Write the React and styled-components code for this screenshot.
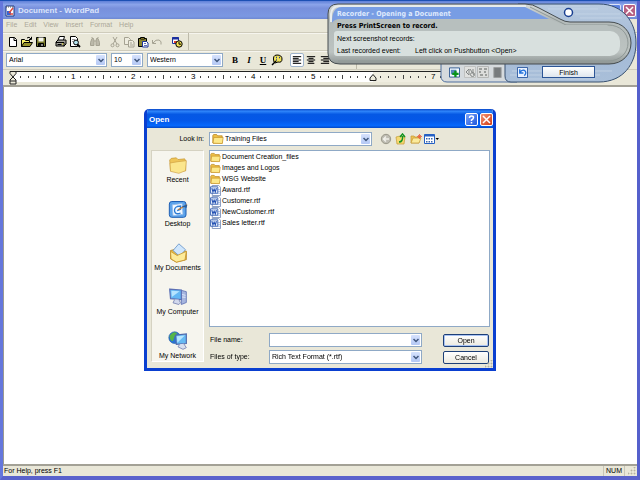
import styled, { createGlobalStyle, css } from 'styled-components';

const GlobalStyle = createGlobalStyle`
    * {
        box-sizing: border-box;
    }
    body {
        margin: 0;
        font-family: 'Liberation Sans', Arial, sans-serif;
        font-size: 7px;
        line-height: 10px;
        color: #000;
    }
    button, input, select {
        font: inherit;
        color: inherit;
        margin: 0;
        padding: 0;
    }
    svg {
        display: block;
        flex: none;
    }
`;

const Desktop = styled.div`
    position: relative;
    height: 100vh;
    overflow: hidden;
    background: #1c50b4;
    padding-top: 1px;
`;

const MainWindow = styled.div`
    height: 100%;
    display: flex;
    flex-direction: column;
    border: solid #6577dc;
    border-width: 0 3px 4px;
    border-right-color: #5560cc;
    border-bottom-color: #5a62cc;
    background: #e9e7d8;
`;

const TitleBar = styled.header`
    display: flex;
    align-items: center;
    gap: 2px;
    height: 18px;
    padding: 1px 1px 0 1px;
    background: linear-gradient(#5f80d8, #8ba4ea 20%, #7890dc 40%, #7b98e2 85%, #6e88d2);
`;

const WindowTitle = styled.h1`
    flex: 1;
    margin: 0;
    font-size: 8px;
    font-weight: 700;
    color: #dbe4fb;
`;

const CaptionButton = styled.button`
    display: flex;
    align-items: center;
    justify-content: center;
    width: 13px;
    height: 13px;
    border: 1px solid #fff;
    border-radius: 2px;
    background: ${(props) => props.$color};
    opacity: ${(props) => (props.$faded ? 0.7 : 1)};
`;

const MenuBar = styled.nav`
    display: flex;
    gap: 7px;
    height: 13px;
    padding: 1px 3px;
    color: #aca899;
`;

const MenuLink = styled.a`
    color: inherit;
    text-decoration: none;
`;

const Bar = styled.div`
    display: flex;
    align-items: center;
    height: ${(props) => props.$height}px;
    padding-left: 3px;
    border-top: 1px solid #cfccbc;
    box-shadow: inset 0 1px #f6f5ee;
`;

const ButtonGroup = styled.div`
    display: flex;
    align-items: center;
    margin-right: 6px;
`;

const ToolButton = styled.button`
    display: flex;
    align-items: center;
    justify-content: center;
    width: 14px;
    height: 14px;
    border: 1px solid transparent;
    background: none;
    ${(props) =>
        props.$pressed &&
        css`
            border-color: #9fb4cc;
            border-radius: 2px;
            background: #fff;
        `}
`;

const StyleGlyph = styled.span`
    font: 700 9px 'Liberation Serif', serif;
    font-style: ${(props) => (props.$italic ? 'italic' : 'normal')};
    text-decoration: ${(props) => (props.$underline ? 'underline' : 'none')};
`;

const BarEnd = styled.span`
    width: 1px;
    height: 100%;
    margin-left: ${(props) => props.$offset}px;
    background: #bdbaaa;
`;

const Combo = styled.div`
    display: flex;
    align-items: center;
    gap: 1px;
    flex: ${(props) => (props.$width ? 'none' : 1)};
    width: ${(props) => (props.$width ? `${props.$width}px` : 'auto')};
    height: 14px;
    margin-right: ${(props) => props.$after || 0}px;
    padding: 1px 1px 1px 2px;
    border: 1px solid #8fa9c6;
    background: #fff;

    select, input {
        flex: 1;
        min-width: 0;
        height: 10px;
        border: 0;
        outline: 0;
        appearance: none;
        background: transparent;
    }
`;

const ArrowBox = styled.span`
    display: flex;
    align-items: center;
    justify-content: center;
    width: 9px;
    height: 100%;
    border-radius: 1px;
    background: linear-gradient(#d6e2fd, #b4c8f5);
    pointer-events: none;
`;

const RulerBar = styled.div`
    display: flex;
    height: 18px;
    padding: 1px 0 3px 2px;
    border-top: 1px solid #cfccbc;
    border-bottom: 2px solid #a3a196;
    overflow: hidden;
`;

const RulerScale = styled.div`
    display: flex;
    height: 11px;
    border-top: 1px solid #222;
    background: linear-gradient(90deg, #fff 360px, #efede0 360px);
`;

const Inch = styled.div`
    display: grid;
    grid-template-columns: repeat(8, 1fr);
    place-items: center;
    flex: none;
    width: 60px;
    transform: translateX(4px);
    font-size: 8px;
`;

const Tick = styled.i`
    width: 1px;
    height: ${(props) => (props.$half ? 4 : 2)}px;
    background: #444;
`;

const Marker = styled.svg`
    margin: 0 -5px 0 3px;
    z-index: 1;
`;

const Page = styled.textarea`
    flex: 1;
    min-height: 0;
    border: 0;
    border-left: 1px solid #9c9a90;
    outline: 0;
    resize: none;
    background: #fff;
`;

const StatusBar = styled.footer`
    display: flex;
    align-items: center;
    height: 12px;
    padding: 0 1px;
    border-top: 2px solid #a3a196;
`;

const StatusText = styled.span`
    flex: 1;
`;

const StatusCell = styled.span`
    padding: 0 2px;
    margin-right: 3px;
    border: solid #c9c6b6;
    border-width: 0 1px;
`;

/* floating recorder */

const Recorder = styled.section`
    position: absolute;
    top: 2px;
    right: 3px;
    z-index: 1;
    width: 310px;
    height: 83px;
    padding: 6px 0 0 10px;
`;

const RecorderShell = styled.svg`
    position: absolute;
    inset: 0;
    z-index: -1;
`;

const RecorderTitle = styled.h2`
    margin: 0;
    font: 700 7px/12px 'DejaVu Sans Condensed', 'DejaVu Sans', sans-serif;
    color: ${(props) => (props.$active ? '#dfeafd' : '#000')};
`;

const EventList = styled.dl`
    display: grid;
    grid-template-columns: 78px 1fr;
    margin: 1px 0 0;
    line-height: 12px;

    dd {
        margin: 0;
    }
`;

const RecorderTools = styled.div`
    display: flex;
    align-items: center;
    gap: 3px;
    margin: 9px 0 0 112px;
`;

const RecorderButton = styled.button`
    display: flex;
    padding: 0;
    border: 0;
    background: none;
    margin-right: ${(props) => props.$after || 0}px;
`;

const FinishButton = styled.button`
    width: 53px;
    height: 12px;
    border: 1px solid #2c5596;
    line-height: 9px;
    background: linear-gradient(#fff, #dfe6ee);
`;

/* open dialog */

const Overlay = styled.div`
    position: absolute;
    inset: 0;
    display: flex;
    align-items: center;
    justify-content: center;
    pointer-events: none;
`;

const Dialog = styled.section`
    width: 352px;
    border: 3px solid #0a3fd0;
    border-top: 0;
    border-radius: 5px 5px 0 0;
    background: #e9e7d8;
    pointer-events: auto;
    overflow: hidden;
`;

const DialogTitle = styled.header`
    display: flex;
    align-items: center;
    gap: 2px;
    height: 19px;
    margin: 0 -3px;
    padding: 2px 3px 0 5px;
    background: linear-gradient(#0a48c8, #2e84fa 12%, #0558e4 28%, #0457e8 60%, #0668fc 88%, #0346c4);

    h2 {
        flex: 1;
        margin: 0;
        font-size: 8px;
        color: #fff;
    }
`;

const DialogBody = styled.div`
    position: relative;
    display: grid;
    grid-template-columns: 53px 1fr;
    grid-template-rows: auto 214px;
    gap: 4px 5px;
    padding: 4px 3px 4px 4px;
`;

const LookInLabel = styled.label`
    align-self: center;
    text-align: right;
`;

const LookInRow = styled.div`
    display: flex;
    align-items: center;
`;

const NavButtons = styled.div`
    display: flex;
    gap: 1px;
    margin-left: 7px;
    width: 111px;
`;

const Places = styled.nav`
    height: 212px;
    overflow: hidden;
    border: 1px solid #fff;
    border-left-color: #d5d2c2;
    border-top-color: #d5d2c2;
    background: #f6f5ee;
`;

const Place = styled.a`
    display: flex;
    flex-direction: column;
    align-items: center;
    height: 44px;
    padding-top: 4px;
    color: inherit;
    text-decoration: none;
    white-space: nowrap;
`;

const MainColumn = styled.div`
    display: flex;
    flex-direction: column;
`;

const FileList = styled.ul`
    display: grid;
    grid-template-rows: repeat(7, 1fr) 95px;
    flex: 1;
    margin: 0 0 6px;
    padding: 1px 0;
    list-style: none;
    border: 1px solid #8fa9c6;
    background: #fff;
    align-content: start;
    grid-template-rows: none;
    grid-auto-rows: 10px;
    row-gap: 1px;
`;

const FileItem = styled.li`
    display: flex;
    align-items: center;
    gap: 1px;
`;

const FormGrid = styled.div`
    display: grid;
    grid-template-columns: 58px 153px 46px;
    column-gap: 1px;
    row-gap: 3px;
    align-items: center;
    padding-left: 1px;
`;

const PushButton = styled.button`
    width: 46px;
    height: 13px;
    margin-left: 20px;
    line-height: 9px;
    border: 1px solid #1d3f77;
    border-radius: 2px;
    background: linear-gradient(#fff, #eceae0);
    box-shadow: ${(props) => (props.$default ? 'inset 0 0 0 1px #a9c3f3' : 'none')};
`;

const DialogGrip = styled.span`
    position: absolute;
    right: 0;
    bottom: 0;
`;

const Icon = ({ size = 12, children }) => (
    <svg width={size} height={size} viewBox="0 0 12 12" fill="none" stroke="#000" aria-hidden="true">
        {children}
    </svg>
);

const ArrowIcon = () => (
    <svg width="6" height="5" viewBox="0 0 6 5" fill="none" stroke="#3f567c" strokeWidth="1.5">
        <path d="M.5 1 3 3.5 5.5 1" />
    </svg>
);

const GripIcon = () => (
    <svg width="8" height="8" fill="#b5b2a2">
        <path d="M6 0h1v1h-1zM3 3h1v1h-1zM6 3h1v1h-1zM0 6h1v1h-1zM3 6h1v1h-1zM6 6h1v1h-1z" stroke="#b5b2a2" strokeWidth=".7" />
    </svg>
);

const FolderIcon = ({ size = 11 }) => (
    <Icon size={size}>
        <path d="M.8 10V2.5L1.6 1.5h3l1 1.3h4.6v7.4H1z" fill="#eebf45" stroke="#b5801a" strokeWidth=".7" />
        <path d="m1 10.2.8-5.7h9.4l-.9 6z" fill="#fde889" stroke="#c9952a" strokeWidth=".7" />
    </Icon>
);

const PlaceFolderIcon = () => (
    <Icon size={20}>
        <path d="M1.5 9.5 1 3l1-1 3-.3 1 1 4-.4.6 1.2v6z" fill="#eec559" stroke="#c29432" strokeWidth=".4" />
        <path d="m1.5 9.800-.3-5L6 4l5-.6-.5 6L6.500 11z" fill="#fbe68d" stroke="#cfa043" strokeWidth=".4" />
    </Icon>
);

const DocIcon = () => (
    <Icon size={11}>
        <path d="M2.5.5h7l2 2v9h-9z" fill="#fff" stroke="#8095bc" />
        <path d="M8 5h3M8 7h3M8 9h3" stroke="#7da1dc" strokeWidth=".7" />
        <path d="M.5 2h8v7h-8z" fill="#e7effb" stroke="#3a63b4" />
        <path d="m2 3.500 1.200 4 1.300-3 1.300 3L7 3.500" stroke="#2653b4" strokeWidth="1.2" />
    </Icon>
);

const WordPadIcon = () => (
    <Icon size={12}>
        <path d="M2 1h8v10H2z" fill="#fff" stroke="#203a80" />
        <path d="M3 6h4v4H3z" fill="#3264d8" stroke="none" />
        <path d="m5 8 4-5M6 9h3" stroke="#e04a3c" strokeWidth="1.5" />
        <path d="M2 2h8" stroke="#53565d" strokeDasharray="1 1" />
    </Icon>
);

const toolGroups = [
    [
        ['New', <path key="n" d="M2.5 1.5h5l2 2v7h-7zM7 1.5v3h2.5" fill="#fff" />],
        [
            'Open',
            <g key="o">
                <path d="M.5 10.5v-7h3l1 1h4v2" fill="#f7ef68" />
                <path d="m.5 10.5 2.5-4h8.500l-2.500 4z" fill="#96912b" />
                <path d="M6 2q2-2 4 1M10.500.8V3.500H8" />
            </g>,
        ],
        [
            'Save',
            <g key="s">
                <path d="M1.500 1.500h9v9h-9z" fill="#77782b" />
                <path d="M3.500 1.500h5v4h-5z" fill="#f5f5ee" stroke="none" />
                <path d="M3.500 7.500h5v3h-5z" fill="#111" />
                <path d="M7 8v2" stroke="#fff" />
            </g>,
        ],
    ],
    [
        [
            'Print',
            <g key="p">
                <path d="m3 4 1.500-3.500h5L8.500 4" fill="#fff" />
                <path d="M1 6l2-2h8v4l-2 2H1z" fill="#a4a49d" />
                <path d="M1 6.500h8v4M2.500 8.500h4" />
                <path d="M7 8h1.500" stroke="#e8d928" />
            </g>,
        ],
        [
            'Print Preview',
            <g key="v">
                <path d="M1.500.5h5l2 2v8h-7z" fill="#fff" />
                <path d="M3 3.500h3M3 5.500h1" stroke="#999" />
                <circle cx="7" cy="6.500" r="2.400" fill="#b7e4ee" />
                <path d="m8.500 8.500 2.500 2.500" strokeWidth="1.800" />
            </g>,
        ],
    ],
    [
        [
            'Find',
            <g key="f" stroke="#a5a292" fill="#bcb9aa">
                <path d="M1.500 6.500 3 2.500h1.500l.5 3v4H1.500zM7 9.500v-4l.5-3H9l1.500 4v3zM5 5h2" />
                <path d="M3 1v1M9 1v1" />
            </g>,
        ],
    ],
    [
        [
            'Cut',
            <g key="c" stroke="#a5a292">
                <path d="m4 1 4 7M8 1 4 8" />
                <circle cx="3.500" cy="9.300" r="1.500" />
                <circle cx="8.500" cy="9.300" r="1.500" />
            </g>,
        ],
        [
            'Copy',
            <g key="y" stroke="#a5a292" fill="#eeecdf">
                <path d="M1.500 1.500h4l2 2v5h-6z" />
                <path d="M5.500 4.500h4l1.500 1.500v5H5.500zM7 7h2M7 9h3" />
            </g>,
        ],
        [
            'Paste',
            <g key="e">
                <path d="M1.500 2.500h8v8h-8z" fill="#8a8431" />
                <path d="M3.500 3V1.500h4V3z" fill="#f3df3c" />
                <path d="M5.500 5.500h4l1.500 1.500v4H5.500z" fill="#fff" stroke="#1b329a" />
                <path d="M7 7.500h2M7 9.500h3" stroke="#1b329a" strokeWidth=".7" />
            </g>,
        ],
        ['Undo', <path key="u" d="M1.500 4v3.500H5M2 7q3-4 6-3t2 4.500" stroke="#a5a292" />],
    ],
    [
        [
            'Date/Time',
            <g key="d">
                <path d="M1.500 1.500h6v6h-6z" fill="#fff" stroke="#1c309e" />
                <path d="M1 2.500h7" stroke="#1c309e" strokeWidth="2" />
                <path d="M3 5h3v2H3z" fill="#e53c33" stroke="none" />
                <circle cx="8" cy="8" r="3.200" fill="#f3e256" />
                <path d="M8 6v2.200h2" />
            </g>,
        ],
    ],
];

const places = [
    ['Recent', <PlaceFolderIcon key="r" />],
    [
        'Desktop',
        <Icon key="d" size={20}>
            <rect x=".8" y="1.500" width="10" height="9.500" rx="1.500" fill="#5ba3ea" stroke="#1f5fb4" strokeWidth=".6" />
            <path d="m2.500 3.500 6-.8.5 6.500-6 .8z" fill="#f2f9ff" stroke="#90b8e8" strokeWidth=".5" />
            <path d="M7.500 8.500q-3 1-3.500-1t1.500-3l2-.3v2L5.500 7" stroke="#2c7cd4" strokeWidth=".8" />
            <path d="m6 6.500 5.500-3" stroke="#c0772e" strokeWidth=".7" />
            <path d="m8 4.500 3.500-1-.3 1.700z" fill="#235da0" stroke="none" />
        </Icon>,
    ],
    [
        'My Documents',
        <Icon key="m" size={20}>
            <path d="m1.500 4.500 4-1 5.500 1.500v5l-6 1.500-3.500-2z" fill="#eabc45" stroke="#b88625" strokeWidth=".5" />
            <path d="m3 4.500 3.500-4L10.500 4 7 8z" fill="#cfe6fc" stroke="#6995c9" strokeWidth=".5" />
            <path d="m1.500 5 4 2.500L11 5l-.8 5.200-5.200 1.300-3.200-2z" fill="#fdeb99" stroke="#c7962d" strokeWidth=".5" />
        </Icon>,
    ],
    [
        'My Computer',
        <Icon key="c" size={20}>
            <path d="m8 2 3 .8v6.500l-3 1.200z" fill="#a7b6df" stroke="#6072b4" strokeWidth=".5" />
            <path d="M8.500 4.500 10.500 5M8.500 6l2 .2" stroke="#e9f0ff" strokeWidth=".5" />
            <path d="m1 1.300 7 .5v5.700L1.500 7z" fill="#63b7f4" stroke="#5d70b4" strokeWidth=".7" />
            <path d="m2 2.200 5 .4L2.300 6z" fill="#b6e4ff" stroke="none" />
            <path d="m4 7.500-1 2 3.500 1 1-1-1-2" fill="#d2d9ed" stroke="#7581b1" strokeWidth=".5" />
        </Icon>,
    ],
    [
        'My Network',
        <Icon key="n" size={20}>
            <circle cx="4" cy="4" r="3.500" fill="#2a74d3" stroke="#1b5aa7" strokeWidth=".4" />
            <path d="M1 3q2-3 4-2 1 1-1 2L3 6Q1 6 1 3z" fill="#55b548" stroke="none" />
            <path d="m4.500 2.500 6.500-.7v5.700L5 8z" fill="#66baf3" stroke="#5069ac" strokeWidth=".7" />
            <path d="m5.300 3.200 4.800-.5L5.600 7z" fill="#b8e5ff" stroke="none" />
            <path d="m7 8-1 1.500 3 1.500 2-1-1.500-2.300" fill="#d7dfef" stroke="#7581b1" strokeWidth=".5" />
        </Icon>,
    ],
];

const folders = ['Document Creation_files', 'Images and Logos', 'WSG Website'];
const files = ['Award.rtf', 'Customer.rtf', 'NewCustomer.rtf', 'Sales letter.rtf'];

const SelectBox = ({ id, label, value, width, after, icon }) => (
    <Combo $width={width} $after={after}>
        {icon}
        <select id={id} aria-label={label} defaultValue={value}>
            <option>{value}</option>
        </select>
        <ArrowBox>
            <ArrowIcon />
        </ArrowBox>
    </Combo>
);

const Ruler = () => (
    <RulerBar>
        <Marker width="10" height="14" viewBox="0 0 10 14" fill="#eceadb" stroke="#222">
            <path d="M2 .5h6v2L5 6 2 2.500zM5 6l3 3v4H2V9zM2 10h6" />
        </Marker>
        <RulerScale>
            {Array.from({ length: 10 }, (_, inch) => (
                <Inch key={inch}>
                    {Array.from({ length: 7 }, (_, i) => (
                        <Tick key={i} $half={i === 3} />
                    ))}
                    {inch === 5 ? (
                        <svg width="8" height="8" viewBox="0 0 8 8" fill="#eceadb" stroke="#222">
                            <path d="M4 1.500 7 5v2.500H1V5z" />
                        </svg>
                    ) : (
                        <span>{inch + 1}</span>
                    )}
                </Inch>
            ))}
        </RulerScale>
    </RulerBar>
);

const AlignIcon = ({ d }) => (
    <Icon size={10}>
        <path d={d} strokeWidth="1.200" />
    </Icon>
);

const FormatBar = () => (
    <Bar $height={19}>
        <SelectBox label="Font" value="Arial" width={101} after={4} />
        <SelectBox label="Font size" value="10" width={32} after={4} />
        <SelectBox label="Script" value="Western" width={76} after={5} />
        <ButtonGroup>
            <ToolButton aria-label="Bold">
                <StyleGlyph>B</StyleGlyph>
            </ToolButton>
            <ToolButton aria-label="Italic">
                <StyleGlyph $italic>I</StyleGlyph>
            </ToolButton>
            <ToolButton aria-label="Underline">
                <StyleGlyph $underline>U</StyleGlyph>
            </ToolButton>
            <ToolButton aria-label="Color">
                <Icon>
                    <path d="M3 8Q1 1 6 1q5 0 5 4 0 4-4 3L4 9z" fill="#efe159" />
                    <path d="M5 3.500h1M8 3.500h1M5 6h1" stroke="#28438f" strokeWidth="1.500" />
                    <path d="m1 11 4-4" strokeWidth="1.500" />
                </Icon>
            </ToolButton>
        </ButtonGroup>
        <ButtonGroup>
            <ToolButton $pressed aria-label="Align left">
                <AlignIcon d="M1 2h10M1 4h7M1 6h10M1 8h7M1 10h10" />
            </ToolButton>
            <ToolButton aria-label="Center">
                <AlignIcon d="M1 2h10M3 4h6M1 6h10M3 8h6M2 10h8" />
            </ToolButton>
            <ToolButton aria-label="Align right">
                <AlignIcon d="M1 2h10M4 4h7M1 6h10M4 8h7M1 10h10" />
            </ToolButton>
        </ButtonGroup>
        <BarEnd $offset={18} />
    </Bar>
);

const RecorderPanel = () => (
    <Recorder>
        <RecorderShell width="310" height="83" viewBox="327 2 310 83" aria-hidden="true">
            <defs>
                <linearGradient id="steel" x2="0" y2="1">
                    <stop offset="0" stopColor="#b9cbe0" />
                    <stop offset=".5" stopColor="#a3b9d6" />
                    <stop offset="1" stopColor="#a9bfd9" />
                </linearGradient>
                <linearGradient id="body" x2="0" y2="1">
                    <stop offset="0" stopColor="#d4d8d7" />
                    <stop offset=".25" stopColor="#b3bab9" />
                    <stop offset=".8" stopColor="#bcc3c1" />
                    <stop offset="1" stopColor="#8d9493" />
                </linearGradient>
            </defs>
            <path d="M441 60v16q0 6 6 6h70V60z" fill="#d5dadd" stroke="#4f6f9e" />
            <path
                d="M505 60v16q0 6 6 6h88c24 0 37-18 37-39S623 4 599 4h-81z"
                fill="url(#steel)"
                stroke="#38506f"
            />
            <path
                d="M548 9h50M575 14h45M580 18h42M512 71h100M510 75h90M520 79h75M550 6h40"
                stroke="#c6d6e7"
                strokeWidth=".8"
            />
            <path
                d="M338 4h187q8 0 14 4l21 11q5 3 10 3h39c14 0 22 10 22 21s-8 21-22 21H340q-12 0-12-11V14q0-10 10-10z"
                fill="url(#body)"
                stroke="#464d50"
            />
            <path
                d="M338 61h270c12 0 20-8 20-18s-8-18-20-18h-42L530 7"
                fill="none"
                stroke="#8f9896"
                strokeWidth="1"
            />
            <path d="M331 22v-8q1-8 8-8h187" fill="none" stroke="#e8ecec" strokeWidth="2" />
            <path d="M332 22q0-15 10-15h183l24 12H340q-6 0-8 4z" fill="#789de4" />
            <path d="M333 31q0-12 8-12h208l15 6h43l7 6z" fill="#b7bfbe" />
            <rect x="334" y="31" width="286" height="25" rx="10" fill="#d8e0de" />
            <rect x="334" y="31" width="30" height="25" rx="3" fill="#d8e0de" />
            <circle cx="568.500" cy="12.500" r="4" fill="#fff" stroke="#193f91" strokeWidth="1.500" />
        </RecorderShell>
        <RecorderTitle $active>Recorder - Opening a Document</RecorderTitle>
        <RecorderTitle as="p">Press PrintScreen to record.</RecorderTitle>
        <EventList>
            <dt>Next screenshot records:</dt>
            <dd />
            <dt>Last recorded event:</dt>
            <dd>Left click on Pushbutton &lt;Open&gt;</dd>
        </EventList>
        <RecorderTools>
            <RecorderButton aria-label="Insert screenshot" $after={1}>
                <Icon size={11}>
                    <path d="M.5 1h11v10H.5z" fill="#f4faff" stroke="#28548e" />
                    <path d="M2 3h6v5H2z" fill="#5687bc" stroke="none" />
                    <path d="M7 4v7M3.500 7.500h7" stroke="#08931c" strokeWidth="2.500" />
                </Icon>
            </RecorderButton>
            <RecorderButton aria-label="Insert sound" $after={-2}>
                <Icon size={12}>
                    <path d="M.5.5h11v11H.5z" fill="#e0e1df" stroke="#c0c2c1" />
                    <path d="m2 6 3-3v6zM6 3l4 6M9 3v4" stroke="#858988" />
                    <circle cx="8.500" cy="8.500" r="2" stroke="#858988" />
                </Icon>
            </RecorderButton>
            <RecorderButton aria-label="Insert explanation">
                <Icon size={12}>
                    <path d="M.5.5h11v11H.5z" fill="#dcdddb" stroke="#b5b7b6" />
                    <path d="M2 3h3M7 3h3M2 6h2M7 6h2M3 9h3M8 9h2" stroke="#858988" strokeWidth="1.500" />
                </Icon>
            </RecorderButton>
            <RecorderButton aria-label="Stop" $after={11}>
                <Icon size={11}>
                    <path d="M2 .5h8v11H2z" fill="#777b7d" stroke="#9a9d9e" />
                </Icon>
            </RecorderButton>
            <RecorderButton aria-label="Undo" $after={11}>
                <Icon size={11}>
                    <path d="M.5.5h11v11H.5z" fill="#e9f2ff" stroke="#28579f" />
                    <path d="M3 2.500v4h4M3.500 6q1-3 4-2.500 4 2 .5 6" stroke="#2372db" strokeWidth="1.500" />
                </Icon>
            </RecorderButton>
            <FinishButton>Finish</FinishButton>
        </RecorderTools>
    </Recorder>
);

const OpenDialog = () => (
    <Overlay>
        <Dialog role="dialog" aria-label="Open">
            <DialogTitle>
                <h2>Open</h2>
                <CaptionButton $color="linear-gradient(135deg, #7ba4fa, #1d57dc)" aria-label="Help">
                    <svg width="9" height="9" viewBox="0 0 9 9" fill="none" stroke="#fff" strokeWidth="1.500">
                        <path d="M2.500 3q0-2 2-2t2 1.500-2 2.500v1M4.500 7v1.500" />
                    </svg>
                </CaptionButton>
                <CaptionButton $color="linear-gradient(135deg, #f19376, #d33c12)" aria-label="Close">
                    <svg width="9" height="9" viewBox="0 0 9 9" stroke="#fff" strokeWidth="1.500">
                        <path d="m1 1 7 7M8 1 1 8" />
                    </svg>
                </CaptionButton>
            </DialogTitle>
            <DialogBody>
                <LookInLabel htmlFor="look-in">Look in:</LookInLabel>
                <LookInRow>
                    <SelectBox
                        id="look-in"
                        value="Training Files"
                        icon={<FolderIcon size={12} />}
                    />
                    <NavButtons>
                        <ToolButton aria-label="Back">
                            <Icon>
                                <circle cx="6" cy="6" r="4.700" fill="#bebcb2" stroke="#999789" />
                                <path d="M9 6H3.500M6 3.500 3.500 6 6 8.500" stroke="#f1f0e9" strokeWidth="1.500" />
                            </Icon>
                        </ToolButton>
                        <ToolButton aria-label="Up one level">
                            <Icon>
                                <path d="m1 4 4-1 5 1-1 7H2z" fill="#f5d970" stroke="#c49a35" strokeWidth=".7" />
                                <path d="M4 9q4 0 3.500-6M5 4l2.500-3L10 4" stroke="#149322" strokeWidth="1.500" />
                            </Icon>
                        </ToolButton>
                        <ToolButton aria-label="New folder">
                            <Icon>
                                <path d="M1 3h3l1 1h4v6H1z" fill="#edc453" stroke="#c49a35" strokeWidth=".7" />
                                <path d="m1 10 2-5h8l-2 5z" fill="#fbea9b" stroke="#c49a35" strokeWidth=".7" />
                                <path d="M9.500 1v5M7 3.500h5M8 2l3 3M11 2 8 5" stroke="#e85e3b" strokeWidth=".8" />
                            </Icon>
                        </ToolButton>
                        <ToolButton aria-label="View">
                            <svg width="15" height="10" viewBox="0 0 15 10">
                                <path d="M.5.5h10v9H.5z" fill="#fff" stroke="#2460c4" />
                                <path d="M.5 1.500h10" stroke="#2460c4" strokeWidth="2" />
                                <path d="M2 4h1.500v1.500H2zM4.500 4H6v1.500H4.500zM7 4h1.500v1.500H7zM2 7h1.500v1.500H2zM4.500 7H6v1.500H4.500zM7 7h1.500v1.500H7z" fill="#3b66ac" />
                                <path d="M11.500 4H15L13.250 6z" />
                            </svg>
                        </ToolButton>
                    </NavButtons>
                </LookInRow>
                <Places>
                    {places.map(([name, icon]) => (
                        <Place key={name} href="#">
                            {icon}
                            {name}
                        </Place>
                    ))}
                </Places>
                <MainColumn>
                    <FileList>
                        {folders.map((name) => (
                            <FileItem key={name}>
                                <FolderIcon />
                                {name}
                            </FileItem>
                        ))}
                        {files.map((name) => (
                            <FileItem key={name}>
                                <DocIcon />
                                {name}
                            </FileItem>
                        ))}
                    </FileList>
                    <FormGrid>
                        <label htmlFor="file-name">File name:</label>
                        <Combo>
                            <input id="file-name" autoFocus />
                            <ArrowBox>
                                <ArrowIcon />
                            </ArrowBox>
                        </Combo>
                        <PushButton $default>Open</PushButton>
                        <label htmlFor="file-type">Files of type:</label>
                        <SelectBox id="file-type" value="Rich Text Format (*.rtf)" />
                        <PushButton>Cancel</PushButton>
                    </FormGrid>
                </MainColumn>
                <DialogGrip>
                    <GripIcon />
                </DialogGrip>
            </DialogBody>
        </Dialog>
    </Overlay>
);

export default function App() {
    return (
        <Desktop>
            <GlobalStyle />
            <MainWindow>
                <TitleBar>
                    <WordPadIcon />
                    <WindowTitle>Document - WordPad</WindowTitle>
                    <CaptionButton $color="#4f79df" $faded aria-label="Restore" />
                    <CaptionButton $color="#b76283" aria-label="Close">
                        <svg width="9" height="9" viewBox="0 0 9 9" stroke="#fff" strokeWidth="1.500">
                            <path d="m1 1 7 7M8 1 1 8" />
                        </svg>
                    </CaptionButton>
                </TitleBar>
                <MenuBar>
                    {['File', 'Edit', 'View', 'Insert', 'Format', 'Help'].map((item) => (
                        <MenuLink key={item} href="#">
                            {item}
                        </MenuLink>
                    ))}
                </MenuBar>
                <Bar $height={18}>
                    {toolGroups.map((group, index) => (
                        <ButtonGroup key={index}>
                            {group.map(([name, drawing]) => (
                                <ToolButton key={name} aria-label={name}>
                                    <Icon>{drawing}</Icon>
                                </ToolButton>
                            ))}
                        </ButtonGroup>
                    ))}
                    <BarEnd $offset={-2} />
                </Bar>
                <FormatBar />
                <Ruler />
                <Page aria-label="Document" />
                <StatusBar>
                    <StatusText>For Help, press F1</StatusText>
                    <StatusCell>NUM</StatusCell>
                    <GripIcon />
                </StatusBar>
            </MainWindow>
            <RecorderPanel />
            <OpenDialog />
        </Desktop>
    );
}
